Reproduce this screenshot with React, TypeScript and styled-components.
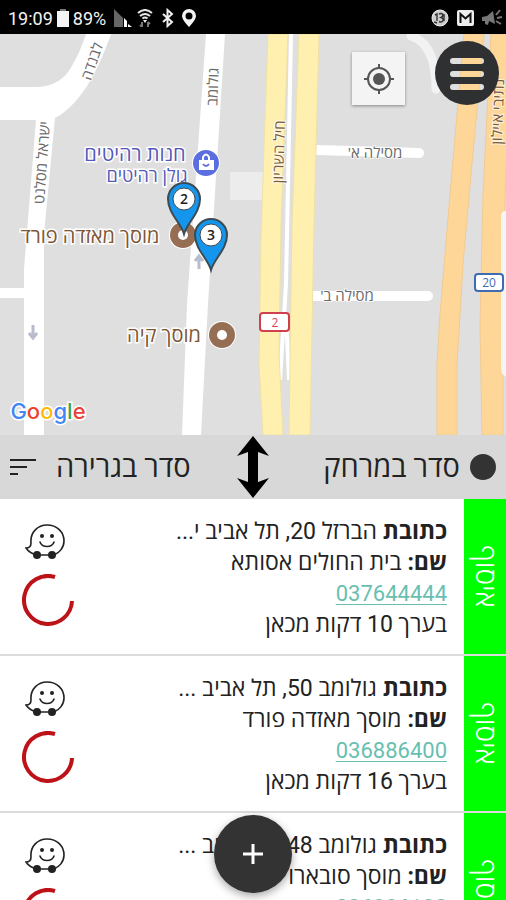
import React from "react";
import styled, { createGlobalStyle } from "styled-components";

const Global = createGlobalStyle`
  * { box-sizing: border-box; }
  body { margin: 0; font-family: Roboto, "Open Sans", "Noto Sans", sans-serif; color: #222; }
  button { font: inherit; color: inherit; border: 0; padding: 0; background: none; cursor: pointer; }
`;

const Screen = styled.div`
  position: relative;
  display: flex;
  flex-direction: column;
  height: 100vh;
  overflow: hidden;
  background: #fff;
`;

const StatusBar = styled.header`
  display: flex;
  align-items: center;
  justify-content: space-between;
  height: 34px;
  flex: none;
  padding: 2px 3px 0 8px;
  background: #000;
  color: #f2f2f2;
  font-size: 18px;
`;

const StatusGroup = styled.div<{ $gap: number }>`
  display: flex;
  align-items: center;
  gap: ${(p) => p.$gap}px;
`;

const MapPanel = styled.main`
  position: relative;
  flex: 1 1 0;
  min-height: 0;
  overflow: hidden;
  background: #dfdfdf;
`;

const MapDrawing = styled.svg`
  display: block;
  width: 100%;
  height: 100%;
  text { font-family: "Open Sans", "Noto Sans", sans-serif; text-anchor: middle; }
`;

const StreetName = styled.text<{ $tone?: string }>`
  direction: rtl;
  font-size: 15px;
  fill: ${(p) => p.$tone ?? "#6b6b6b"};
  stroke: #ffffff;
  stroke-width: 2px;
  stroke-opacity: 0.7;
  paint-order: stroke;
`;

const PlaceName = styled.text<{ $tone: string; $size: number }>`
  direction: rtl;
  font-size: ${(p) => p.$size}px;
  fill: ${(p) => p.$tone};
  stroke: #fff;
  stroke-width: 3px;
  paint-order: stroke;
`;

const Wordmark = styled.text`
  && { font-family: Inter, Lato, sans-serif; }
  font-size: 22px;
  font-weight: 500;
  stroke: #fff;
  stroke-width: 3px;
  paint-order: stroke;
`;

const LocateButton = styled.button`
  position: absolute;
  top: 18px;
  right: 101px;
  display: grid;
  place-items: center;
  width: 53px;
  height: 53px;
  && { background: #f4f4f4; }
  box-shadow: 0 1px 3px rgba(0, 0, 0, 0.4);
`;

const MenuButton = styled.button`
  position: absolute;
  top: 7px;
  right: 7px;
  width: 64px;
  height: 64px;
  svg { display: block; }
`;

const SortBar = styled.nav`
  display: grid;
  grid-template-columns: 1fr 36px 1fr;
  align-items: center;
  flex: none;
  height: 64px;
  background: #d8d8d8;
  direction: rtl;
`;

const SortButton = styled.button<{ $end?: boolean }>`
  display: flex;
  align-items: center;
  justify-content: ${(p) => (p.$end ? "flex-end" : "flex-start")};
  gap: ${(p) => (p.$end ? 20 : 10)}px;
  padding: 0 10px;
  font-size: 29px;
  line-height: 36px;
  white-space: nowrap;
`;

const Dot = styled.span`
  width: 26px;
  height: 26px;
  border-radius: 50%;
  background: #333;
`;

const ResizeHandle = styled.button`
  svg { display: block; margin: 0 auto; }
`;

const Jobs = styled.ul`
  flex: 1 1 0;
  min-height: 0;
  margin: 0;
  padding: 0;
  list-style: none;
  overflow-y: auto;
  scrollbar-width: none;
  direction: rtl;
`;

const Job = styled.li`
  display: flex;
  min-height: 157px;
  border-bottom: 2px solid #dcdcdc;
`;

const JobTag = styled.div`
  display: flex;
  align-items: center;
  justify-content: center;
  width: 42px;
  flex: none;
  background: #00ff00;
  color: #fff;
  font-size: 28px;
  font-weight: 300;
  line-height: 42px;
  writing-mode: vertical-rl;
`;

const JobText = styled.div`
  flex: 1;
  min-width: 0;
  padding: 17px 17px 0 0;
  font-size: 23px;
  line-height: 31px;
  white-space: nowrap;
`;

const Line = styled.div`
  height: 31px;
  overflow: hidden;
`;

const Phone = styled.a`
  color: #68bfb0;
  font-size: 22px;
  text-underline-offset: 3px;
  text-decoration-thickness: 1px;
`;

const JobActions = styled.div`
  display: flex;
  flex-direction: column;
  align-items: center;
  gap: 14px;
  width: 95px;
  flex: none;
  padding-top: 24px;
  svg { display: block; }
`;

const AddButton = styled.button`
  position: absolute;
  left: calc(50% - 39px);
  bottom: 7px;
  display: grid;
  place-items: center;
  width: 78px;
  height: 78px;
  border-radius: 50%;
  && { background: #333; }
  box-shadow: 0 3px 8px rgba(0, 0, 0, 0.35);
`;

const BatteryIcon = () => (
  <svg width="12" height="18" viewBox="0 0 12 18" aria-hidden="true">
    <path d="M3 0h6v3H3z" fill="#777" />
    <path d="M0 2h12v16H0z" fill="#f4f4f4" />
  </svg>
);

const SignalIcon = () => (
  <svg width="19" height="18" viewBox="0 0 19 18" aria-hidden="true">
    <path d="M0 0l9 9v9H0z" fill="#666" />
    <path d="M10 9l3 3v6h-3zM14 15l4 3h-4z" fill="#fff" />
  </svg>
);

const WifiIcon = () => (
  <svg width="16" height="18" viewBox="0 0 16 18" fill="none" aria-hidden="true">
    <path d="M1 4q7-6 14 0M3 7q5-4 10 0M5.500 9.500q2.500-2 5 0" stroke="#e5e5e5" strokeWidth="2" />
    <path d="M6 11h4l-2 3z" fill="#eee" />
    <path d="M5 18v-5M3 16l2 2M11 13v5M11 13l2 2" stroke="#777" strokeWidth="2" />
  </svg>
);

const BluetoothIcon = () => (
  <svg width="13" height="20" viewBox="0 0 13 20" fill="none" stroke="#eee" strokeWidth="2" aria-hidden="true">
    <path d="M2 6l9 8-4.500 4V2L11 6l-9 8" />
  </svg>
);

const PinIcon = () => (
  <svg width="14" height="18" viewBox="0 0 14 18" aria-hidden="true">
    <path fillRule="evenodd" d="M7 0a7 7 0 0 1 7 7c0 4-7 11-7 11S0 11 0 7a7 7 0 0 1 7-7zm0 3.500a3.500 3.500 0 1 0 0 7 3.500 3.500 0 0 0 0-7z" fill="#f4f4f4" />
  </svg>
);

const BadgeIcon = () => (
  <svg width="18" height="18" viewBox="0 0 18 18" fill="none" aria-hidden="true">
    <circle cx="9" cy="9" r="8" fill="#ccc" stroke="#eee" strokeWidth="1" />
    <path d="M4 6l2-1v7M8 5c4-2 5 2 2 3.500 4 1 2 6-2 4M13 5v7M3 13l3 1" stroke="#333" strokeWidth="1.400" />
  </svg>
);

const MailIcon = () => (
  <svg width="17" height="16" viewBox="0 0 17 16" fill="none" aria-hidden="true">
    <rect width="17" height="16" rx="2" fill="#eee" />
    <path d="M3.500 13V4l5 4.500 5-4.500v9" stroke="#111" strokeWidth="2" />
  </svg>
);

const HornIcon = () => (
  <svg width="21" height="18" viewBox="0 0 21 18" fill="none" aria-hidden="true">
    <path d="M0 8l5-1 6-5 2 13-6-3-1 4-3-1v-3H0z" fill="#777" />
    <path d="M14 6l4-5M15 9l5-1M14 12l5 3" stroke="#777" strokeWidth="2" />
  </svg>
);

const Marker = ({ x, y, label }: { x: number; y: number; label: string }) => (
  <g transform={`translate(${x} ${y})`}>
    <path d="M0 35C-3 24-16 14-16 0a16 16 0 0 1 32 0C16 14 3 24 0 35z" fill="#1596ee" stroke="#3c4a52" strokeWidth="2" />
    <circle r="11" fill="#fff" stroke="#3c4a52" strokeWidth="1" />
    <text y="5" fontSize="14" fontWeight="600" fill="#222">{label}</text>
  </g>
);

const Garage = ({ x, y }: { x: number; y: number }) => (
  <g transform={`translate(${x} ${y})`}>
    <circle r="14" fill="#fff" />
    <circle r="13" fill="#956e53" />
    <circle r="5" fill="#fff" />
  </g>
);

const StreetMap = () => (
  <MapDrawing viewBox="0 0 506 401" preserveAspectRatio="xMidYMid slice" role="img" aria-label="מפה">
    <rect width="506" height="401" fill="#dfdfdf" />
    <g fill="#fff">
      <path d="M86 0h25C101 28 84 69 55 84L44 200V401H24V235L36 86H0V53H35Q62 53 73 30Q80 18 86 0z" />
      <path d="M0 254h26v10H0z" />
      <path d="M206 0h19L208 270 201 401h-19l5-131z" />
    </g>
    <path d="M230 138h37v28h-37z" fill="#ececec" />
    <path d="M411 2q25 8 25 53" fill="none" stroke="#f2f2f2" strokeWidth="9" strokeLinecap="round" />
    <path d="M317 116l102 3M312 262h116" stroke="#fff" strokeWidth="10" strokeLinecap="round" />
    <path d="M291 0L286 250l-6 96M286 280l3 66" fill="none" stroke="#fff" strokeWidth="4" />
    <g fill="#fff0b0" stroke="#eee0a6" strokeWidth="1">
      <path d="M268 0h20l-7 190-2 130 4 81h-20l-4-70 2-130z" />
      <path d="M299 0h20l-5 190-4 211h-21l3-211z" />
    </g>
    <g fill="#fed798" stroke="#f0cb92" strokeWidth="1">
      <path d="M464 0h20l-13 140-8 90-6 100v71h-20v-71l3-50 8-96z" />
      <path d="M491 0h20l-8 220 0 181h-21l-2-110 3-130z" />
    </g>
    <path d="M506 177h-2q-3 2-3 6v152q0 5 5 8z" fill="#f5f5f5" />
    <g stroke="#b8bccb" strokeWidth="3" fill="none">
      <path d="M33 291v12M29 299l4 5 4-5M199 235v-12M195 227l4-5 4 5" />
    </g>

    <StreetName transform="translate(97 29) rotate(-71)">לבנדה</StreetName>
    <StreetName transform="translate(218 53) rotate(-88)">גולומב</StreetName>
    <StreetName transform="translate(47 129) rotate(-86)">ישראל מסלנט</StreetName>
    <StreetName transform="translate(284 118) rotate(-88)" $tone="#7a5a3c">חיל השריון</StreetName>
    <StreetName transform="translate(503 78) rotate(-88)" $tone="#7a5a3c">נתיבי איילון</StreetName>
    <StreetName x="375" y="124">מסילה א'</StreetName>
    <StreetName x="347" y="267">מסילה ב'</StreetName>

    <PlaceName x="135" y="127" $size={20} $tone="#5458b8">חנות רהיטים</PlaceName>
    <PlaceName x="147" y="148" $size={18} $tone="#5458b8">גולן רהיטים</PlaceName>
    <circle cx="206" cy="129" r="14" fill="#fff" />
    <circle cx="206" cy="129" r="13" fill="#5b6ee0" />
    <path d="M199 126h15v10h-15z" fill="#fff" />
    <path d="M203 126v-3q3-5 6 0v3" fill="none" stroke="#fff" strokeWidth="2" />
    <path d="M203 130q3 4 6 0" fill="none" stroke="#5b6ee0" strokeWidth="2" />
    <PlaceName x="90" y="209" $size={20} $tone="#7d5636">מוסך מאזדה פורד</PlaceName>
    <PlaceName x="164" y="308" $size={20} $tone="#7d5636">מוסך קיה</PlaceName>
    <Garage x={183} y={201} />
    <Garage x={222} y={301} />
    <Marker x={184} y={165} label="2" />
    <Marker x={211} y={201} label="3" />

    <rect x="260" y="279" width="29" height="18" rx="3" fill="#fff" stroke="#cf3f4e" strokeWidth="2" />
    <text x="275" y="293" fontSize="12" fill="#d94454">2</text>
    <rect x="475" y="240" width="28" height="17" rx="3" fill="#fff" stroke="#3f6bb4" strokeWidth="2" />
    <text x="489" y="253" fontSize="12" fill="#3f6bb4">20</text>
    <Wordmark x="48" y="385">
      <tspan fill="#4285f4">G</tspan><tspan fill="#ea4335">o</tspan><tspan fill="#fbbc05">o</tspan><tspan fill="#4285f4">g</tspan><tspan fill="#34a853">l</tspan><tspan fill="#ea4335">e</tspan>
    </Wordmark>
  </MapDrawing>
);

const WazeIcon = () => (
  <svg width="46" height="37" viewBox="0 0 46 37" fill="none" stroke="#222" strokeWidth="1.600" aria-hidden="true">
    <path d="M6 20C5 9 13 2 22 2c10 0 17 7 17 16 0 7-5 12-10 14H12C7 31 3 28 1 25c3 0 5-1 5-5z" />
    <path d="M15 19c2 6 12 6 14 0" strokeLinecap="round" />
    <circle cx="17" cy="13" r="2" fill="#222" stroke="none" />
    <circle cx="27" cy="13" r="2" fill="#222" stroke="none" />
    <circle cx="12" cy="32" r="4" fill="#222" stroke="none" />
    <circle cx="27" cy="32" r="4" fill="#222" stroke="none" />
  </svg>
);

const ProgressRing = () => (
  <svg width="52" height="52" viewBox="0 0 52 52" aria-hidden="true">
    <path d="M33 3A24 24 0 1 0 50 27" fill="none" stroke="#bd1218" strokeWidth="4" />
  </svg>
);

type JobData = { address: string; name: string; phone: string; minutes: number };

const jobs: JobData[] = [
  { address: "הברזל 20, תל אביב י...", name: "בית החולים אסותא", phone: "037644444", minutes: 10 },
  { address: "גולומב 50, תל אביב ...", name: "מוסך מאזדה פורד", phone: "036886400", minutes: 16 },
  { address: "גולומב 48, תל אביב ...", name: "מוסך סובארו", phone: "036886188", minutes: 16 },
];

export default function App() {
  return (
    <>
      <Global />
      <Screen>
        <StatusBar>
          <StatusGroup $gap={8}>
            <StatusGroup $gap={4}>
              <span>19:09</span>
              <BatteryIcon />
              <span>89%</span>
            </StatusGroup>
            <StatusGroup $gap={4}>
              <SignalIcon />
              <WifiIcon />
            </StatusGroup>
            <BluetoothIcon />
            <PinIcon />
          </StatusGroup>
          <StatusGroup $gap={8}>
            <BadgeIcon />
            <MailIcon />
            <HornIcon />
          </StatusGroup>
        </StatusBar>

        <MapPanel>
          <StreetMap />
          <LocateButton aria-label="המיקום שלי">
            <svg width="32" height="32" viewBox="0 0 32 32" fill="none" stroke="#555" strokeWidth="2">
              <circle cx="16" cy="16" r="11" />
              <circle cx="16" cy="16" r="6" fill="#555" stroke="none" />
              <path d="M16 1v5M16 26v5M1 16h5M26 16h5" />
            </svg>
          </LocateButton>
          <MenuButton aria-label="תפריט">
            <svg width="64" height="64" viewBox="0 0 64 64">
              <path
                fillRule="evenodd"
                fill="#2f3032"
                d="M32 0a32 32 0 1 1 0 64a32 32 0 0 1 0-64zM18 17a3 3 0 0 0 0 6h28a3 3 0 0 0 0-6zM18 30a3 3 0 0 0 0 6h28a3 3 0 0 0 0-6zM18 43a3 3 0 0 0 0 6h28a3 3 0 0 0 0-6z"
              />
            </svg>
          </MenuButton>
        </MapPanel>

        <SortBar>
          <SortButton>
            <Dot />
            סדר במרחק
          </SortButton>
          <ResizeHandle aria-label="שינוי גודל">
            <svg width="34" height="64" viewBox="0 0 34 64">
              <path d="M17 1L33 21 22 17V47L33 43 17 63 1 43 12 47V17L1 21z" fill="#000" />
            </svg>
          </ResizeHandle>
          <SortButton $end>
            סדר בגרירה
            <svg width="26" height="18" viewBox="0 0 26 18" stroke="#222" strokeWidth="2">
              <path d="M0 2h26M0 9h17M0 16h8" />
            </svg>
          </SortButton>
        </SortBar>

        <Jobs>
          {jobs.map((job) => (
            <Job key={job.phone}>
              <JobTag>איסוף</JobTag>
              <JobText>
                <Line><b>כתובת</b> {job.address}</Line>
                <Line><b>שם:</b> {job.name}</Line>
                <Line><Phone href={`tel:${job.phone}`}>{job.phone}</Phone></Line>
                <Line>בערך {job.minutes} דקות מכאן</Line>
              </JobText>
              <JobActions>
                <button aria-label="ניווט"><WazeIcon /></button>
                <ProgressRing />
              </JobActions>
            </Job>
          ))}
        </Jobs>

        <AddButton aria-label="הוספה">
          <svg width="22" height="22" viewBox="0 0 22 22" stroke="#fff" strokeWidth="3">
            <path d="M11 1v20M1 11h20" />
          </svg>
        </AddButton>
      </Screen>
    </>
  );
}
